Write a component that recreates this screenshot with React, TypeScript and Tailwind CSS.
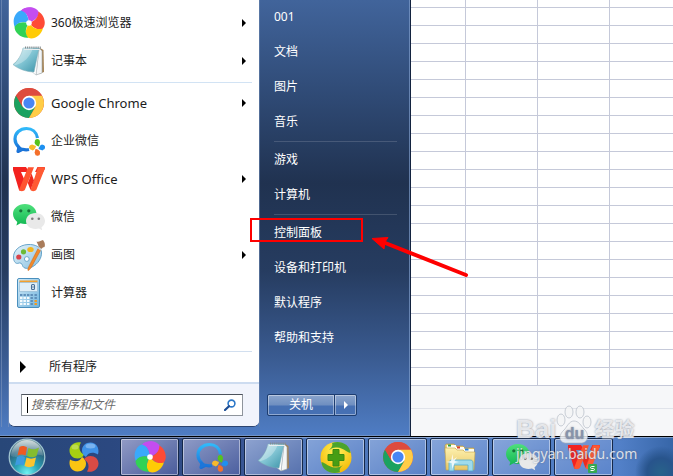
import type { ReactNode } from 'react'

type IconProps = { className?: string }

function PinwheelIcon({ className = 'h-8 w-8' }: IconProps) {
  const petals = ['#c44df0', '#ff4b36', '#ffcb05', '#31d255', '#3aa9fb']
  return (
    <svg viewBox="0 0 32 32" className={className} aria-hidden>
      {petals.map((fill, i) => (
        <path
          key={fill}
          fill={fill}
          transform={`rotate(${i * 72} 16 16)`}
          d="M16 16C16 11 14.500 5.500 8 3.500C13 -1 23 -1 26 5.500C25.500 11 20.400 14 16 16Z"
        />
      ))}
      <path
        fill={petals[0]}
        d="M16 16C16 11 14.500 5.500 8 3.500C11 .8 15 -.2 18.500 .8L16 16Z"
      />
      <circle cx="16" cy="16" r="2.800" fill="#fff" />
    </svg>
  )
}

function NotepadIcon({ className = 'h-8 w-8' }: IconProps) {
  return (
    <svg viewBox="0 0 32 32" className={className} aria-hidden>
      <defs>
        <linearGradient id="note" x1="0" y1="0" x2="1" y2="1">
          <stop offset="0" stopColor="#c9e9ef" />
          <stop offset=".5" stopColor="#7fc3d2" />
          <stop offset="1" stopColor="#3b93a8" />
        </linearGradient>
      </defs>
      <path d="M27 3 30.500 5 31 27 26 29Z" fill="#a58354" />
      <path d="M26 3 29 6 29 28 23 30Z" fill="#f4f6f7" stroke="#9aa6aa" strokeWidth=".6" />
      <path d="M26 3 23 30 18 26Z" fill="#fff" stroke="#aab5b8" strokeWidth=".5" />
      <path d="M10 3 26 3 21 27C14 27 5 24 0 19.500C5 16 9 9 10 3Z" fill="url(#note)" stroke="#7aa9b4" strokeWidth=".5" />
      <path d="M10 3 20 3C17 12 11 18 3 20L1 20C5 16 9 9 10 3Z" fill="#fff" opacity=".3" />
      <path d="M12 2.500H28" stroke="#848c90" strokeWidth="2" strokeDasharray="1 .9" />
      <path d="M11 4.500H27" stroke="#e8edef" strokeWidth="1" />
    </svg>
  )
}

function ChromeIcon({ className = 'h-8 w-8' }: IconProps) {
  return (
    <svg viewBox="0 0 32 32" className={className} aria-hidden>
      <circle cx="16" cy="16" r="15" fill="#dd4b3e" />
      <path d="M3.010 8.500A15 15 0 0 0 16 31L22.500 19.750 16 16 9.500 19.750Z" fill="#1ba260" />
      <path d="M16 31A15 15 0 0 0 28.990 8.500H16V16L22.500 19.750Z" fill="#ffcd46" />
      <path d="M3.010 8.500A15 15 0 0 1 28.990 8.500H16L9.500 19.750Z" fill="#dd4b3e" />
      <circle cx="16" cy="16" r="7.200" fill="#fff" />
      <circle cx="16" cy="16" r="5.600" fill="#4886f4" />
    </svg>
  )
}

function WeComIcon({ className = 'h-8 w-8' }: IconProps) {
  return (
    <svg viewBox="0 0 32 32" className={className} aria-hidden>
      <defs>
        <linearGradient id="wecom" x1="0" y1="0" x2="0" y2="1">
          <stop offset="0" stopColor="#30b9fa" />
          <stop offset="1" stopColor="#196fd6" />
        </linearGradient>
      </defs>
      <path
        d="M24.500 13C23.500 7 19 3.500 13.500 3.500C7 3.500 2 8 2 14C2 17.500 4 20.500 6 22.500L5 26.500L9.500 24.300C12 25 14 25 16 24.500"
        fill="none"
        stroke="url(#wecom)"
        strokeWidth="3.200"
        strokeLinejoin="round"
      />
      <path d="M4.500 20 4 27.500 11 24Z" fill="#1c76da" />
      <path d="M21.500 17.500 24.300 14.500 27 17.500 26 21.500C23.500 21 22 19.500 21.500 17.500Z" fill="#57c21d" />
      <path d="M29 19.500 32 22 29.500 25.500 25.500 24C26 22 27 20.500 29 19.500Z" fill="#1e90f0" />
      <path d="M27 27 24.500 30.500 21.500 28 22.500 24C25 24 26.500 25.500 27 27Z" fill="#f4702b" />
      <path d="M19.500 25.500 16 22.500 19 19.500 23 21C22.500 23.500 21 25 19.500 25.500Z" fill="#f7b92c" />
      <circle cx="24.300" cy="16.500" r="2.500" fill="#57c21d" />
      <circle cx="29.500" cy="22.300" r="2.500" fill="#1e90f0" />
      <circle cx="24.500" cy="28.300" r="2.500" fill="#f4702b" />
      <circle cx="18.700" cy="22.300" r="2.500" fill="#f7b92c" />
    </svg>
  )
}

function WpsIcon({ className = 'h-8 w-8' }: IconProps) {
  return (
    <svg viewBox="0 0 32 32" className={className} aria-hidden>
      <path d="M0 4H31C32 4 32.200 5 31.800 6L29 11C28.500 9.500 28 9 26.500 9H22L24.500 4Z" fill="#f22a20" />
      <path d="M0 4H13L16 9H8L12 18 8.500 27C8 28 6.500 28 6 27L0 7Z" fill="#f3221f" />
      <path d="M15 4.200H21L12 26.500C11.300 28.300 7.500 28.800 6 27Z" fill="#ff5430" />
      <path d="M25 4.200H31.500C32 5 31.800 6 31.300 7L23.500 26.500C22.500 28.500 18.500 28.700 17.500 27Z" fill="#ff5a33" />
      <path d="M18.500 10.500 21 17.500 17.500 27 14.800 20Z" fill="#ee2a1d" />
    </svg>
  )
}

function WeChatIcon({ className = 'h-8 w-8' }: IconProps) {
  return (
    <svg viewBox="0 0 32 32" className={className} aria-hidden>
      <defs>
        <linearGradient id="chatGreen" x1="0" y1="0" x2="0" y2="1">
          <stop offset="0" stopColor="#4fe07c" />
          <stop offset="1" stopColor="#12b753" />
        </linearGradient>
      </defs>
      <path
        d="M12 3C5 3 0 7.500 0 13C0 16.300 1.800 19 4.300 20.900L3.400 24.500 7.500 22.300C9 22.800 10.500 23 12 23C18.500 23 23.500 18.500 23.500 13S18.500 3 12 3Z"
        fill="url(#chatGreen)"
      />
      <circle cx="7.800" cy="9.800" r="1.600" fill="#17733a" />
      <circle cx="15.800" cy="9.800" r="1.600" fill="#17733a" />
      <path
        d="M22.500 12C17 12 13 15.600 13 20S17 28 22.500 28C23.800 28 25 27.800 26 27.500L29.200 29.200 28.500 26.300C30.700 24.800 32 22.500 32 20C32 15.600 28 12 22.500 12Z"
        fill="#e9e9e9"
      />
      <circle cx="19.300" cy="17.800" r="1.300" fill="#7d7d7d" />
      <circle cx="25.800" cy="17.800" r="1.300" fill="#7d7d7d" />
    </svg>
  )
}

function PaintIcon({ className = 'h-8 w-8' }: IconProps) {
  return (
    <svg viewBox="0 0 32 32" className={className} aria-hidden>
      <defs>
        <linearGradient id="palette" x1="0" y1="0" x2="1" y2="1">
          <stop offset="0" stopColor="#e6f4fb" />
          <stop offset="1" stopColor="#86bfe0" />
        </linearGradient>
      </defs>
      <path
        d="M15 5.500C6 6 0 12 .5 19C.8 23 3 25 5 24.300C7.500 23.300 9 24.500 9.500 26.500C10.500 30 15 30 19 28C25 25 29 19 28.500 13C28 8 22 5.200 15 5.500Z"
        fill="url(#palette)"
        stroke="#5b9cc4"
        strokeWidth=".9"
      />
      <circle cx="5.800" cy="18" r="2.600" fill="#d9434a" />
      <circle cx="10.500" cy="12.800" r="2.600" fill="#6cba36" />
      <ellipse cx="17.500" cy="10.500" rx="3.200" ry="2.600" fill="#f5b51c" />
      <circle cx="13.800" cy="20" r="2.400" fill="#fff" stroke="#6fa9cb" strokeWidth="1" />
      <path d="M25 9.500 27.500 11.500 18.500 28C17 30.500 15.500 31.800 15 31.500C14.600 31 15 29 16.300 26.500Z" fill="#f28a2b" stroke="#c9661a" strokeWidth=".5" />
      <path d="M25 9.500 27.500 11.500 29 9 26.500 7Z" fill="#c9d2d8" />
      <path d="M23.500 2.500C26 3.500 27.500 1.500 30 1C31.500 3 32.500 5.500 31.500 8C30 8 29.500 9 28.500 9.800L25.500 7.500C25.500 5.500 24 4.500 23.500 2.500Z" fill="#a97c5b" />
    </svg>
  )
}

function CalculatorIcon({ className = 'h-8 w-8' }: IconProps) {
  return (
    <svg viewBox="0 0 32 32" className={className} aria-hidden>
      <defs>
        <linearGradient id="calc" x1="0" y1="0" x2="1" y2="1">
          <stop offset="0" stopColor="#d3ebf8" />
          <stop offset="1" stopColor="#6fb3dd" />
        </linearGradient>
      </defs>
      <rect x="4.500" y="1.500" width="22" height="29" rx="1.500" fill="url(#calc)" stroke="#4a8fbd" />
      <rect x="6.500" y="3.500" width="18" height="2" fill="#f3a02c" />
      <rect x="6.500" y="5.500" width="18" height="9" fill="#dfeef7" stroke="#8fb6cf" strokeWidth=".6" />
      <rect x="18.500" y="7.500" width="3" height="5" rx="1" fill="none" stroke="#4a6f96" strokeWidth="1.100" />
      <path d="M19 10h2.500" stroke="#4a6f96" strokeWidth=".8" />
      {[17, 20, 23, 26].map(y =>
        [7, 10.500, 14, 17.500, 21.500].map(x => (
          <rect
            key={`${x}-${y}`}
            x={x}
            y={y}
            width="2.400"
            height="2"
            fill={x > 21 && y > 22 ? '#f39a21' : x > 16 || y < 18 ? '#5f8fba' : '#f4fafd'}
          />
        ))
      )}
    </svg>
  )
}

function FourBallsIcon({ className = 'h-8 w-8' }: IconProps) {
  return (
    <svg viewBox="0 0 32 32" className={className} aria-hidden>
      <path d="M13 1.500C7 0 1.500 4 1.500 9.500C1.500 14 5 17.500 9.500 17.500C12.500 17.500 15 16 16 13.500C11.500 11.500 10 6 13 1.500Z" fill="#a6cf13" />
      <path d="M30 13.500C32 7 28 1.500 22.500 1.500C17.500 1.500 14 5 14 9.500C14 12.500 15.500 14.500 18 16C20 11.500 25 10.500 30 13.500Z" fill="#3f92e8" />
      <path d="M2 18.500C0 25 4 30.500 9.500 30.500C14.500 30.500 18 27 18 22.500C18 19.500 16.500 17.500 14 16C12 20.500 7 21.500 2 18.500Z" fill="#fac413" />
      <path d="M19 30.500C25 32 30.500 28 30.500 22.500C30.500 18 27 15 22.500 15C19.500 15 17 16.500 16 18.500C20.500 20.500 22 26 19 30.500Z" fill="#d94b45" />
      <ellipse cx="7" cy="6" rx="3.500" ry="2.500" fill="#fff" opacity=".25" />
      <ellipse cx="22.500" cy="5" rx="5" ry="2.500" fill="#fff" opacity=".3" />
    </svg>
  )
}

function SafeGuardIcon({ className = 'h-8 w-8' }: IconProps) {
  return (
    <svg viewBox="0 0 32 32" className={className} aria-hidden>
      <defs>
        <radialGradient id="ball" cx=".5" cy=".3" r=".75">
          <stop offset="0" stopColor="#fff35a" />
          <stop offset="1" stopColor="#f5b500" />
        </radialGradient>
      </defs>
      <circle cx="16" cy="16.500" r="15.500" fill="url(#ball)" />
      <path d="M12 2C20 -1 30 3 30.500 12C26 11 24 7 17 6.500C14 6 11 7.500 9 9C12 6.500 13 4 12 2Z" fill="#4ba42c" />
      <path d="M20 31C12 34 2 30 1.500 21C6 22 8 26 15 26.500C18 27 21 25.500 23 24C20 26.500 19 29 20 31Z" fill="#4ba42c" />
      <path d="M13 8.500H19V13.500H24V19.500H19V25H13V19.500H8V13.500H13Z" fill="#479d14" stroke="#3a8a10" strokeWidth="1" strokeLinejoin="round" />
    </svg>
  )
}

function ExplorerIcon({ className = 'h-8 w-8' }: IconProps) {
  return (
    <svg viewBox="0 0 32 32" className={className} aria-hidden>
      <defs>
        <linearGradient id="folder" x1="0" y1="0" x2="0" y2="1">
          <stop offset="0" stopColor="#fdf0ae" />
          <stop offset="1" stopColor="#e8c765" />
        </linearGradient>
      </defs>
      <path d="M1 4.500 2 3H10L12 5H19L21 7H30V12H1Z" fill="#e8cf7b" stroke="#b59642" strokeWidth=".6" />
      <path d="M3 4h9v3H3ZM12 6h8v3h-8ZM20 8h10v3H20Z" fill="#fffef3" />
      <rect x="4" y="3.500" width="3" height="2" fill="#2da042" />
      <rect x="13" y="5.500" width="3" height="2" fill="#d8402f" />
      <rect x="21" y="7.500" width="3.500" height="2" fill="#2b82d9" />
      <path d="M1 7H11L13 9H19L21 11H31L30 29H2Z" fill="url(#folder)" stroke="#c2a24c" strokeWidth=".6" />
      <path d="M5 30V22C5 20 6 19 8 19H26C28 19 29 20 29 22V30H24V24H10V30Z" fill="#9bdcf2" stroke="#4fa9d0" strokeWidth=".8" opacity=".95" />
      <path d="M8.500 13 9.300 18.500 13 16 10.500 20 15 21 10.500 22 8.500 28 7.500 22 2 21 7 20Z" fill="#fff" opacity=".8" />
    </svg>
  )
}

function SheetIcon() {
  return (
    <span className="relative">
      <WpsIcon />
      <svg viewBox="0 0 9 9" className="absolute right-[3px] bottom-0 h-[9px] w-[9px]" aria-hidden>
        <rect width="9" height="9" rx="1" fill="#35a852" />
        <path d="M6.500 2.500H3.500C2.300 2.500 2.300 4.500 3.500 4.500H5.500C6.700 4.500 6.700 6.500 5.500 6.500H2.500" fill="none" stroke="#fff" />
      </svg>
    </span>
  )
}

function StartOrb() {
  return (
    <svg viewBox="0 0 38 38" className="h-[38px] w-[38px]" aria-hidden>
      <defs>
        <radialGradient id="orb" cx=".5" cy=".95" r=".95">
          <stop offset="0" stopColor="#6ff3f2" />
          <stop offset=".35" stopColor="#2ba5b8" />
          <stop offset=".7" stopColor="#2c6580" />
          <stop offset="1" stopColor="#6f8f90" />
        </radialGradient>
        <linearGradient id="orbShine" x1="0" y1="0" x2="0" y2="1">
          <stop offset="0" stopColor="#fff" stopOpacity=".7" />
          <stop offset="1" stopColor="#fff" stopOpacity=".1" />
        </linearGradient>
      </defs>
      <circle cx="19" cy="19" r="17.800" fill="url(#orb)" stroke="#9fc3cf" strokeWidth="1.300" />
      <path d="M3 18A16 16 0 0 1 35 18C27 14 11 22 3 18Z" fill="url(#orbShine)" />
      <path d="M11.500 9C14 7.500 17 8 19 9.500L17.500 17.500C15 16 12.500 16 9.500 17.500Z" fill="#ee5a22" />
      <path d="M20.500 10C23.500 11.500 27 12 31 9.500L28.500 18C25 20 22 19.500 19 18Z" fill="#84bd2f" />
      <path d="M9 19C12 17.500 14.500 17.500 17 19L15.500 27.500C13 26 10.500 26 7 27.500Z" fill="#3d9be0" />
      <path d="M18.500 19.500C21.500 21 24.500 21 28 19.500L26 28C22.500 29.500 19.500 29.500 16.500 28Z" fill="#fdc42e" />
    </svg>
  )
}

type Program = { name: string; icon: ReactNode; more?: boolean; latin?: boolean }

const pinned: Program[] = [
  { name: '360极速浏览器', icon: <PinwheelIcon />, more: true },
  { name: '记事本', icon: <NotepadIcon />, more: true },
]

const recent: Program[] = [
  { name: 'Google Chrome', icon: <ChromeIcon />, more: true, latin: true },
  { name: '企业微信', icon: <WeComIcon /> },
  { name: 'WPS Office', icon: <WpsIcon />, more: true, latin: true },
  { name: '微信', icon: <WeChatIcon /> },
  { name: '画图', icon: <PaintIcon />, more: true },
  { name: '计算器', icon: <CalculatorIcon /> },
]

const places = [
  ['001', '文档', '图片', '音乐'],
  ['游戏', '计算机'],
  ['控制面板', '设备和打印机', '默认程序', '帮助和支持'],
]

const running = [
  { name: '360极速浏览器', icon: <PinwheelIcon />, look: 'from-[#929bc5] to-[#4a5c9b]' },
  { name: '企业微信', icon: <WeComIcon />, look: 'from-[#8f9bc6] to-[#4c5f9f]' },
  { name: '记事本', icon: <NotepadIcon />, look: 'from-[#8ea3d0] to-[#5671ad]' },
  { name: '360安全卫士', icon: <SafeGuardIcon />, look: 'from-[#84a3d8] to-[#5b82c7]' },
  { name: 'Google Chrome', icon: <ChromeIcon />, look: 'from-[#84a3d8] to-[#5b82c7]' },
  { name: '资源管理器', icon: <ExplorerIcon />, look: 'from-[#86a5da] to-[#5f87cb]' },
  { name: '微信', icon: <WeChatIcon />, look: 'from-[#86a5da] to-[#5f87cb]' },
  { name: 'WPS', icon: <SheetIcon />, look: 'from-[#7b9cd5] to-[#5a84cb]' },
]

function RightArrow({ className }: IconProps) {
  return (
    <svg viewBox="0 0 4 8" className={className} fill="currentColor" aria-hidden>
      <path d="M0 0 4 4 0 8Z" />
    </svg>
  )
}

function ProgramRow({ name, icon, more, latin }: Program) {
  return (
    <li>
      <button type="button" className="flex h-[38px] w-full items-center gap-1.5 pr-[13px] pl-1 text-left">
        {icon}
        <span className={latin ? 'flex-1 text-[13px]' : 'flex-1'}>{name}</span>
        {more ? <RightArrow className="h-2 w-1 text-black" /> : null}
      </button>
    </li>
  )
}

function ProgramsPane() {
  return (
    <section className="flex w-[250px] flex-col overflow-hidden rounded-b-md border-b border-[#2c4470] bg-white text-[#1c1c1c]">
      <ul className="pt-1">
        {pinned.map(p => <ProgramRow key={p.name} {...p} />)}
      </ul>
      <hr className="mt-0.5 mr-[7px] mb-px ml-[11px] border-[#d2e3f4]" />
      <ul>
        {recent.map(p => <ProgramRow key={p.name} {...p} />)}
      </ul>
      <hr className="mt-[39px] mr-[7px] ml-[11px] border-[#d2dfef]" />
      <button type="button" className="flex h-[30px] items-center gap-[23px] pl-[11px] text-left">
        <RightArrow className="h-3 w-1.5 text-black" />
        所有程序
      </button>
      <div className="flex-1 border-t-2 border-[#cddcf0] bg-[#f1f4fc] px-3 py-[10px]">
        <div className="mr-1 flex h-[22px] items-center border border-[#8e949c] border-t-[#4d535c] bg-white pr-1.5 pl-[5px]">
          <span className="h-4 w-px bg-black" />
          <input
            aria-label="搜索程序和文件"
            placeholder="搜索程序和文件"
            className="min-w-0 flex-1 bg-transparent pl-[3px] italic outline-none placeholder:text-[#6b6b6b]"
          />
          <svg viewBox="0 0 12 12" className="h-3 w-3" fill="none" aria-hidden>
            <circle cx="7.500" cy="4.500" r="3.400" stroke="#2d78c8" strokeWidth="1.600" />
            <path d="M5 7.200 1 11" stroke="#1d4d94" strokeWidth="2.200" strokeLinecap="round" />
          </svg>
        </div>
      </div>
    </section>
  )
}

function PlacesPane() {
  return (
    <nav className="flex flex-1 flex-col border-l border-[#6480ab]/70 text-white">
      {places.map((group, i) => (
        <div key={group[0]} className="pr-3 pl-[14px]">
          {i > 0 ? <hr className="my-px border-white/15" /> : null}
          <ul>
            {group.map(name => (
              <li key={name}>
                <a href="#" className="flex h-[35px] items-center pb-px">{name}</a>
              </li>
            ))}
          </ul>
        </div>
      ))}
      <div className="mt-[38px] flex pl-[7px]">
        <button
          type="button"
          className="h-[22px] w-[68px] rounded-l-xs border border-[#1d3d70] bg-linear-to-b from-[#8ba5cd] via-[#6f8fc0] via-50% to-[#4670b3] to-55% inset-ring inset-ring-white/40"
        >
          关机
        </button>
        <button
          type="button"
          aria-label="关机选项"
          className="-ml-px flex h-[22px] w-[23px] items-center justify-center rounded-r-xs border border-[#1d3d70] bg-linear-to-b from-[#8ba5cd] via-[#6f8fc0] via-50% to-[#4670b3] to-55% inset-ring inset-ring-white/40"
        >
          <RightArrow className="h-2 w-1" />
        </button>
      </div>
    </nav>
  )
}

function Callout() {
  return (
    <>
      <div className="absolute top-[218px] left-[250px] h-6 w-[113px] border-2 border-[#fe0000]" />
      <svg viewBox="0 0 100 44" className="absolute top-[234px] left-[370px] z-10 h-11 w-[100px]" aria-hidden>
        <path d="M14 8.500 96 41" stroke="#fe0000" strokeWidth="4" strokeLinecap="round" />
        <path d="M2 4.500 18 3.500 15 8 14 15Z" fill="#fe0000" stroke="#fe0000" />
      </svg>
    </>
  )
}

function StartMenu() {
  return (
    <div className="relative w-[411px] shrink-0 border-r border-[#13233f] bg-[linear-gradient(#41649b_0,#2f4a75_22%,#203250_42%,#263c60_62%,#3a5b91_82%,#4f7dc4_100%)]">
      <div className="flex h-full border-r border-b border-[#7f9ccb]/70 pb-2">
        <div className="ml-px w-2 border-x border-[#7d95bd]/60" />
        <ProgramsPane />
        <PlacesPane />
      </div>
      <Callout />
    </div>
  )
}

function Spreadsheet() {
  return (
    <div className="min-w-0 flex-1 overflow-hidden bg-[#f6f7f9]">
      <table className="w-full table-fixed border-separate border-spacing-0 bg-white">
        <colgroup>
          <col className="w-[55px]" />
          <col className="w-[72px]" />
          <col className="w-[72px]" />
          <col />
        </colgroup>
        <tbody>
          {Array.from({ length: 22 }, (_, row) => (
            <tr key={row} className={row === 0 ? 'h-2' : 'h-[18px]'}>
              {[0, 1, 2, 3].map(col => (
                <td key={col} className="border-r border-b border-[#c5c9d9] p-0 last:border-r-0" />
              ))}
            </tr>
          ))}
        </tbody>
      </table>
      <div className="h-[23px] border-b border-[#e0e3ea]" />
    </div>
  )
}

function Taskbar() {
  return (
    <footer className="flex h-10 shrink-0 overflow-hidden border-t border-black bg-[linear-gradient(90deg,#284778_0,#2b4880_110px,#344f8c_230px,#4c74b7_300px,#5280c8_620px,#3766a8_100%)]">
      <div className="flex w-full items-start gap-[3px] border-t border-white/35">
        <button type="button" aria-label="开始" className="mr-4 ml-2">
          <StartOrb />
        </button>
        <button type="button" aria-label="360软件" className="mr-3.5 flex h-[38px] w-[38px] items-center justify-center">
          <FourBallsIcon />
        </button>
        {running.map(app => (
          <button
            key={app.name}
            type="button"
            aria-label={app.name}
            className={`flex h-[38px] w-[59px] shrink-0 items-center justify-center rounded-xs border border-[#152849] bg-linear-to-br inset-ring inset-ring-white/45 ${app.look}`}
          >
            {app.icon}
          </button>
        ))}
        <div className="h-full flex-1 bg-[radial-gradient(circle_at_45px_34px,#28628a_0,#28548c_14px,transparent_26px)]" />
      </div>
    </footer>
  )
}

function Watermark() {
  return (
    <div className="absolute right-[37px] bottom-3 w-[120px] text-[#f3f4f6]/85 text-shadow-[0_0_2px_rgb(90_100_120/0.7)]">
      <div className="flex items-end font-['Liberation_Sans',sans-serif] text-[26px] leading-[30px] font-bold">
        <span>Bai</span>
        <span className="relative flex h-10 w-9 shrink-0 items-end justify-center">
          <svg viewBox="0 0 36 40" className="absolute inset-0 h-10 w-9" fill="#f3f4f6" fillOpacity=".85" stroke="#a9b0bc" strokeOpacity=".6" aria-hidden>
            <ellipse cx="5" cy="16" rx="4" ry="6" />
            <ellipse cx="13" cy="8" rx="4" ry="6" />
            <ellipse cx="24" cy="8" rx="4" ry="6" />
            <ellipse cx="31" cy="18" rx="4" ry="6" />
            <path d="M18 17C23 17 25 22 28 25C33 29 33 38 26 39H9C2 38 3 30 8 26C11 23 13 17 18 17Z" />
          </svg>
          <span className="relative text-[16px] leading-5 text-[#8793aa]">du</span>
        </span>
        <span className="ml-0.5 font-['Noto_Sans_CJK_SC',sans-serif] text-[20px] whitespace-nowrap">经验</span>
      </div>
      <p className="text-[14px] leading-5">jingyan.baidu.com</p>
    </div>
  )
}

export default function App() {
  return (
    <div className="relative flex min-h-screen flex-col overflow-hidden bg-[#3b64a5] font-['Noto_Sans','Noto_Sans_CJK_SC',sans-serif] text-[12px] leading-4">
      <main className="flex flex-1">
        <StartMenu />
        <Spreadsheet />
      </main>
      <Taskbar />
      <Watermark />
    </div>
  )
}
